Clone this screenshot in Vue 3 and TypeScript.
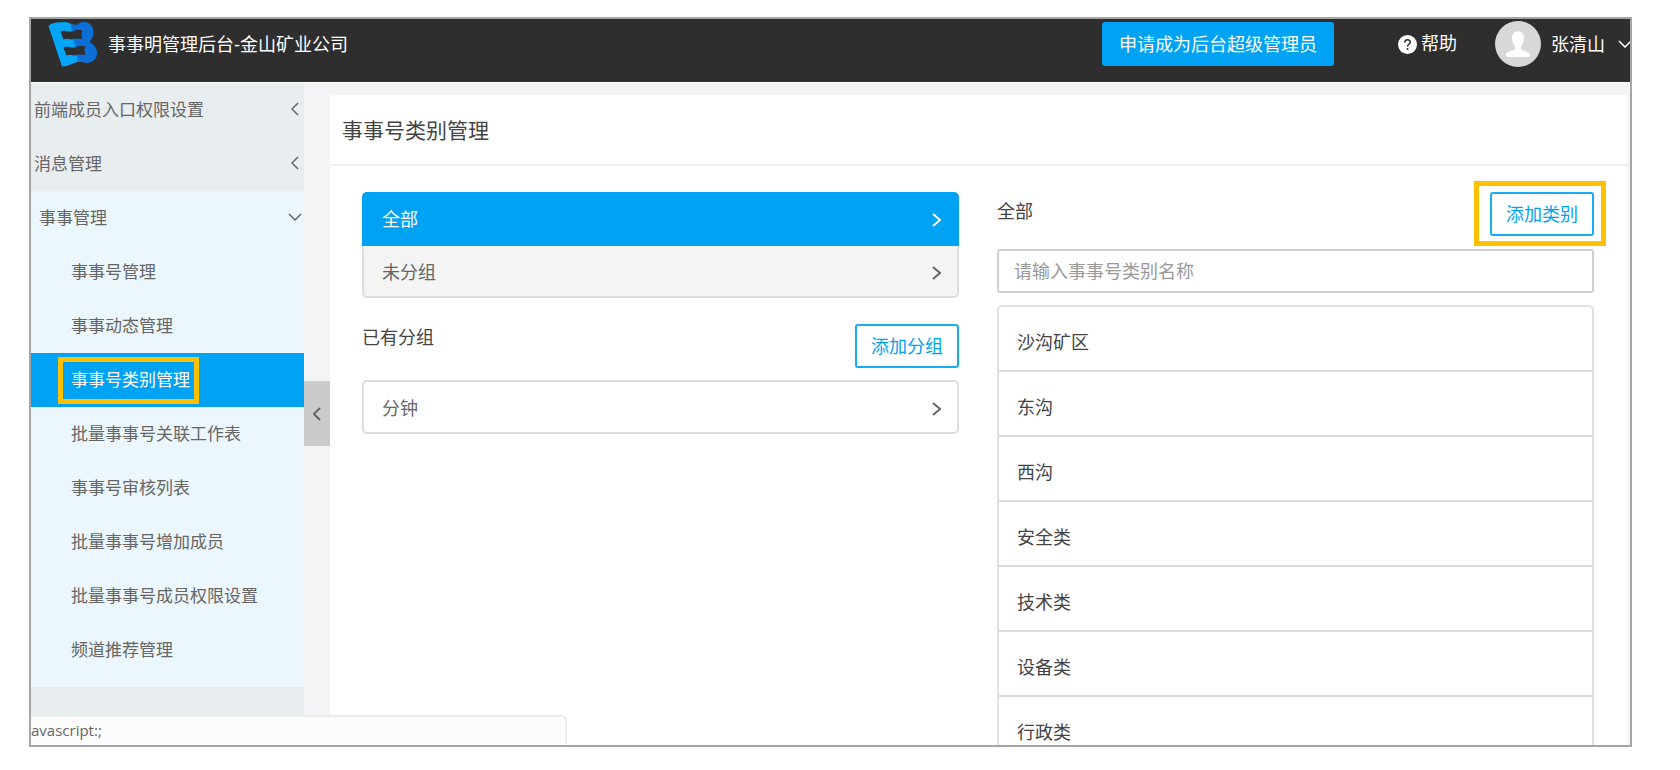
<script setup lang="ts">
import { ref } from 'vue'

interface MenuItem {
  label: string
  active?: boolean
}

const collapsedMenus: string[] = ['前端成员入口权限设置', '消息管理']

const subMenu: MenuItem[] = [
  { label: '事事号管理' },
  { label: '事事动态管理' },
  { label: '事事号类别管理', active: true },
  { label: '批量事事号关联工作表' },
  { label: '事事号审核列表' },
  { label: '批量事事号增加成员' },
  { label: '批量事事号成员权限设置' },
  { label: '频道推荐管理' },
]

const categories: string[] = ['沙沟矿区', '东沟', '西沟', '安全类', '技术类', '设备类', '行政类']

const keyword = ref('')
</script>

<template>
  <div class="page">
    <div class="frame">
      <header class="topbar">
        <svg class="logo" viewBox="0 0 50 46" aria-hidden="true">
          <path
            fill="#04a5f5"
            d="M0.500 5 C5 0.500 12 1.500 17 1 C21 1 24 4 27 4 L33 41 L31 41 C26 40.500 23 45 14 45.500 Z"
          />
          <path
            fill="#0b6fd6"
            d="M22.500 2.800 C24 3.500 25 4 27 4 C30 3.500 32 0.500 37 1 C43 1.500 46 7 45.500 12 C45 17 43 19 41.500 21 C47 24 50 29 49 34 C48 39 43 42 39 42 C36 42 34 40 30 41 Z"
          />
          <g fill="#2e2e2e">
            <path d="M12.500 10.500 C17 8 21 12 26 10 C29 8.500 32 8.500 34.500 9.500 C33 12 33.500 15 34.500 17.500 C31 18.500 29 16.500 25.500 18 C22 19.500 19 16.500 15.500 18.500 Z" />
            <path d="M15.500 26.500 C20 24 24 28 29 26 C32 24.500 35 24.500 37.500 25.500 C36 28 36.500 31 37.500 33.500 C34 34.500 32 32.500 28.500 34 C25 35.500 22 32.500 18.500 34.500 Z" />
          </g>
        </svg>
        <h1 class="brand">事事明管理后台-金山矿业公司</h1>
        <button type="button" class="apply">申请成为后台超级管理员</button>
        <a class="help" href="#help">
          <svg viewBox="0 0 19 19" aria-hidden="true">
            <circle cx="9.500" cy="9.500" r="9.500" fill="#fff" />
            <path d="M6.700 7.400 C6.700 3.800 12.300 3.800 12.300 7.200 C12.300 9.300 9.500 9.200 9.500 11.400" fill="none" stroke="#2e2e2e" stroke-width="1.500" />
            <circle cx="9.500" cy="13.900" r="1" fill="#2e2e2e" />
          </svg>
          <span>帮助</span>
        </a>
        <button type="button" class="user">
          <svg class="avatar" viewBox="0 0 46 46" aria-hidden="true">
            <circle cx="23" cy="23" r="23" fill="#d8d8d8" />
            <path
              fill="#fff"
              d="M23 10.500 C27 10.500 29.300 13.500 29 17.500 C28.800 21 27.500 23.500 26 25 V28 C27 30 34.500 30 35 33.500 C35.200 35.500 34.500 36 33 36 H13 C11.500 36 10.800 35.500 11 33.500 C11.500 30 19 30 20 28 V25 C18.500 23.500 17.200 21 17 17.500 C16.700 13.500 19 10.500 23 10.500 Z"
            />
          </svg>
          <span>张清山</span>
          <svg class="down" viewBox="0 0 14 8" aria-hidden="true"><path d="M1 1 L7 7 L13 1" /></svg>
        </button>
      </header>

      <div class="body">
        <nav class="sidebar">
          <a v-for="m in collapsedMenus" :key="m" class="menu" href="#menu">
            <span>{{ m }}</span>
            <svg class="side" viewBox="0 0 8 14" aria-hidden="true"><path d="M7 1 L1 7 L7 13" /></svg>
          </a>
          <div class="open-group">
            <a class="menu parent" href="#menu">
              <span>事事管理</span>
              <svg class="down" viewBox="0 0 14 8" aria-hidden="true"><path d="M1 1 L7 7 L13 1" /></svg>
            </a>
            <a
              v-for="item in subMenu"
              :key="item.label"
              class="menu child"
              :class="{ active: item.active }"
              href="#menu"
            >
              <span :class="{ marked: item.active }">{{ item.label }}</span>
            </a>
          </div>
        </nav>

        <div class="gutter">
          <button type="button" class="toggle" aria-label="收起菜单">
            <svg class="side" viewBox="0 0 8 14" aria-hidden="true"><path d="M7 1 L1 7 L7 13" /></svg>
          </button>
        </div>

        <main class="panel">
          <h2 class="title">事事号类别管理</h2>
          <div class="columns">
            <section>
              <div class="groups">
                <button type="button" class="group selected">
                  <span>全部</span>
                  <svg class="next" viewBox="0 0 9 14" aria-hidden="true"><path d="M1 1 L8 7 L1 13" /></svg>
                </button>
                <button type="button" class="group plain">
                  <span>未分组</span>
                  <svg class="next" viewBox="0 0 9 14" aria-hidden="true"><path d="M1 1 L8 7 L1 13" /></svg>
                </button>
              </div>
              <div class="section-head own">
                <h3>已有分组</h3>
                <button type="button" class="add">添加分组</button>
              </div>
              <button type="button" class="group boxed">
                <span>分钟</span>
                <svg class="next" viewBox="0 0 9 14" aria-hidden="true"><path d="M1 1 L8 7 L1 13" /></svg>
              </button>
            </section>

            <section>
              <div class="section-head">
                <h3>全部</h3>
                <button type="button" class="add marked">添加类别</button>
              </div>
              <input v-model="keyword" class="search" type="text" aria-label="事事号类别名称" placeholder="请输入事事号类别名称" />
              <ul class="list">
                <li v-for="c in categories" :key="c">{{ c }}</li>
              </ul>
            </section>
          </div>
        </main>
      </div>

      <div class="status">avascript:;</div>
    </div>
  </div>
</template>

<style>
body {
  margin: 0;
  background: #fff;
}
</style>

<style scoped>
.page,
.page * {
  box-sizing: border-box;
}

.page {
  display: flex;
  height: 100vh;
  padding: 17px 48px 23px 29px;
  color: #444;
  font-family: "Liberation Sans", "Noto Sans CJK SC", sans-serif;
  font-size: 18px;
  line-height: 26px;
}

button,
input {
  margin: 0;
  font: inherit;
}

button {
  padding: 0;
  border: 0;
  background: none;
  color: inherit;
  cursor: pointer;
}

a {
  color: inherit;
  text-decoration: none;
}

h1,
h2,
h3 {
  margin: 0;
  font-size: inherit;
  font-weight: 400;
}

svg {
  flex: none;
  display: block;
}

.frame {
  position: relative;
  flex: 1;
  min-width: 0;
  display: flex;
  flex-direction: column;
  border: 2px solid #a5a5a5;
  overflow: hidden;
}

.topbar {
  flex: none;
  display: flex;
  align-items: center;
  height: 63px;
  padding: 0 0 13px 17px;
  background: #2e2e2e;
  color: #fff;
  white-space: nowrap;
}

.logo {
  width: 50px;
  height: 46px;
}

.brand {
  flex: 1;
  margin-left: 10px;
  padding-top: 2px;
}

.apply {
  height: 44px;
  padding: 2px 17px 0;
  border-radius: 3px;
  background: #00a2f4;
}

.help {
  display: flex;
  align-items: center;
  gap: 4px;
  margin-left: 64px;
}

.help svg {
  width: 19px;
  height: 19px;
}

.user {
  display: flex;
  align-items: center;
  margin-left: 38px;
  margin-right: -2px;
}

.user span {
  padding-top: 2px;
}

.avatar {
  width: 46px;
  height: 46px;
  margin-right: 10px;
}

.down,
.side,
.next {
  fill: none;
  stroke: #666;
  stroke-width: 1.5;
}

.down {
  width: 14px;
  height: 8px;
}

.side {
  width: 8px;
  height: 14px;
}

.next {
  width: 9px;
  height: 14px;
  stroke: currentColor;
  stroke-width: 2;
}

.user .down {
  margin-left: 13px;
  stroke: #fff;
}

.body {
  flex: 1;
  min-height: 0;
  display: flex;
  border-top: 1px solid #fff;
  background: #f3f4f6;
}

.sidebar {
  flex: none;
  width: 273px;
  background: #e8edf0;
  color: #666;
  font-size: 17px;
}

.menu {
  display: flex;
  align-items: center;
  justify-content: space-between;
  height: 54px;
  padding: 2px 5px 0 3px;
}

.menu svg {
  margin-bottom: 4px;
}

.open-group {
  padding-bottom: 10px;
  background: #ebf6fd;
}

.parent {
  padding: 2px 2px 0 8px;
}

.child {
  padding-left: 40px;
}

.active {
  background: #00a2f4;
  color: #fff;
}

.marked {
  position: relative;
}

.marked::after {
  content: "";
  position: absolute;
  inset: -10px;
  border: 5px solid #ffc000;
  pointer-events: none;
}

.child .marked::after {
  inset: -11px -9px -10px -13px;
}

.gutter {
  flex: none;
  width: 26px;
  padding-top: 298px;
}

.toggle {
  display: flex;
  align-items: center;
  justify-content: center;
  width: 26px;
  height: 65px;
  background: #cbcbcb;
}

.toggle .side {
  stroke-width: 2;
}

.panel {
  flex: 1;
  min-width: 0;
  margin: 12px 3px 0 0;
  background: #fff;
}

.title {
  height: 71px;
  padding-left: 12px;
  border-bottom: 2px solid #f0f0f0;
  font-size: 21px;
  line-height: 72px;
}

.columns {
  display: grid;
  grid-template-columns: 1fr 1fr;
  gap: 38px;
  padding: 26px 33px 0 32px;
}

.groups {
  display: flex;
  flex-direction: column;
}

.group {
  display: flex;
  align-items: center;
  justify-content: space-between;
  width: 100%;
  height: 54px;
  padding: 2px 18px 0 20px;
}

.selected {
  border-radius: 5px 5px 0 0;
  background: #00a2f4;
  color: #fff;
}

.plain {
  height: 52px;
  padding: 3px 16px 0 18px;
  border: 2px solid #dedede;
  border-top: 0;
  border-radius: 0 0 5px 5px;
  background: #f4f4f4;
  color: #666;
}

.boxed {
  height: 54px;
  padding: 3px 16px 0 18px;
  border: 2px solid #dedede;
  border-radius: 5px;
  color: #666;
}

.section-head {
  display: flex;
  align-items: flex-start;
  justify-content: space-between;
  height: 44px;
}

.section-head h3 {
  padding-top: 7px;
}

.own {
  margin: 26px 0 12px;
}

.own h3 {
  padding-top: 1px;
}

.add {
  height: 44px;
  padding: 2px 14px 0;
  border: 2px solid #1aabf5;
  border-radius: 3px;
  background: #fff;
  color: #00a2f4;
}

.add.marked::after {
  inset: -13px -14px -12px -18px;
}

.search {
  display: block;
  width: 100%;
  height: 44px;
  margin: 13px 0 12px;
  padding: 2px 15px 0;
  border: 2px solid #d0d0d0;
  border-radius: 3px;
  outline: 0;
  background: #fff;
  color: #444;
}

.search::placeholder {
  color: #999;
  opacity: 1;
}

.list {
  margin: 0;
  padding: 0;
  border: 2px solid #e0e0e0;
  border-radius: 5px;
  list-style: none;
}

.list li {
  height: 65px;
  padding: 23px 18px 0;
  border-bottom: 2px solid #dcdcdc;
}

.status {
  position: absolute;
  left: 0;
  bottom: 0;
  width: 536px;
  height: 30px;
  border: 2px solid #ececec;
  border-width: 2px 2px 0 0;
  border-radius: 0 6px 0 0;
  background: #fcfcfc;
  color: #666;
  font-family: "Open Sans", "Noto Sans", sans-serif;
  font-size: 15px;
  line-height: 26px;
}
</style>
